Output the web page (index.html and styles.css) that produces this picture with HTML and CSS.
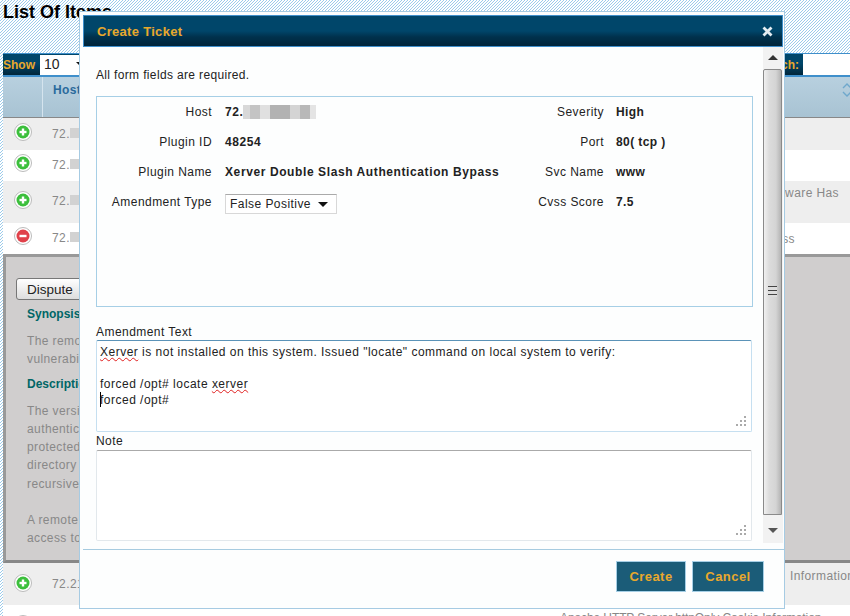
FILE: index.html
```html
<!DOCTYPE html>
<html lang="en">
<head>
  <meta charset="UTF-8" />
  <title>List Of Items</title>
  <link rel="stylesheet" href="styles.css">
</head>
<body>
  <svg class="icon-defs" width="0" height="0">
    <symbol id="row-open" viewBox="0 0 18 18">
      <circle cx="9" cy="9" r="8.5" fill="#fff" stroke="#bbb" />
      <circle cx="9" cy="9" r="6.5" fill="#3cbf3c" />
      <rect x="5.5" y="7.8" width="7" height="2.4" fill="#fff" />
      <rect x="7.8" y="5.5" width="2.4" height="7" fill="#fff" />
    </symbol>
    <symbol id="row-close" viewBox="0 0 18 18">
      <circle cx="9" cy="9" r="8.5" fill="#fff" stroke="#bbb" />
      <circle cx="9" cy="9" r="6.5" fill="#e0414a" />
      <rect x="5.5" y="7.8" width="7" height="2.4" fill="#fff" />
    </symbol>
    <symbol id="grip" viewBox="0 0 12 12">
      <path d="M9 0h2v2H9zM5 4h2v2H5zM9 4h2v2H9zM1 8h2v2H1zM5 8h2v2H5zM9 8h2v2H9z" fill="#aaa" />
    </symbol>
  </svg>

  <h1 class="page-title">List Of Items</h1>

  <div class="table-wrap">
    <div class="toolbar">
      <span class="toolbar-label">Show</span>
      <span class="select-box page-size">10</span>
      <span class="toolbar-label search-label">Search:</span>
      <span class="search-box"></span>
    </div>
    <div class="table-head">
      <div class="col-icon"></div>
      <div class="col-host">Host</div>
      <svg class="sort-icon" width="10" height="14" viewBox="0 0 10 14">
        <path d="M1 5l4-4 4 4M1 9l4 4 4-4" fill="none" stroke="#6fa8cc" stroke-width="1.4" />
      </svg>
    </div>

    <div class="row row-short row-first odd">
      <div class="col-icon"><svg class="row-icon"><use href="#row-open" /></svg></div>
      <div class="col-host">72.<span class="blur-tail"></span></div>
    </div>
    <div class="row row-short">
      <div class="col-icon"><svg class="row-icon"><use href="#row-open" /></svg></div>
      <div class="col-host">72.<span class="blur-tail"></span></div>
    </div>
    <div class="row row-tall odd">
      <div class="col-icon"><svg class="row-icon"><use href="#row-open" /></svg></div>
      <div class="col-host">72.<span class="blur-tail"></span></div>
      <div class="col-plugin end-a">Xerver Software Has</div>
    </div>
    <div class="row row-short">
      <div class="col-icon"><svg class="row-icon"><use href="#row-close" /></svg></div>
      <div class="col-host">72.<span class="blur-tail"></span></div>
      <div class="col-plugin end-b">Slash Authentication Bypass</div>
    </div>

    <div class="detail">
      <button class="dispute-btn">Dispute</button>
      <h4 class="detail-head">Synopsis</h4>
      <p class="detail-text">The remote web server is affected by an authentication bypass<br>vulnerability.</p>
      <h4 class="detail-head">Description</h4>
      <p class="detail-text">The version of Xerver installed on the remote host allows<br>authentication bypass. A request for a password<br>protected resource with a double slash gets a<br>directory listing, and the server will follow<br>recursive requests.<br><br>A remote attacker can use this to gain<br>access to protected files.</p>
    </div>

    <div class="row row-tall row-after odd">
      <div class="col-icon"><svg class="row-icon"><use href="#row-open" /></svg></div>
      <div class="col-host">72.21</div>
      <div class="col-plugin start-a">Information</div>
    </div>
    <div class="row row-clipped">
      <div class="col-icon"><svg class="row-icon"><use href="#row-open" /></svg></div>
      <div class="col-plugin start-b">Apache HTTP Server httpOnly Cookie Information</div>
    </div>
  </div>

  <!-- Create ticket dialog -->
  <div class="dialog">
    <div class="dialog-title">
      <span>Create Ticket</span>
      <svg class="dialog-close" width="11" height="11" viewBox="0 0 11 11">
        <path d="M1.5 1.5l8 8M9.5 1.5l-8 8" stroke="#e4edf2" stroke-width="2.8" />
      </svg>
    </div>

    <div class="dialog-body">
      <div class="dialog-content">
        <p class="intro">All form fields are required.</p>

        <div class="fields">
          <div class="field-label">Host</div>
          <div class="field-value">72.<span class="blur-host"></span></div>
          <div class="field-label">Severity</div>
          <div class="field-value side">High</div>

          <div class="field-label">Plugin ID</div>
          <div class="field-value">48254</div>
          <div class="field-label">Port</div>
          <div class="field-value side">80( tcp )</div>

          <div class="field-label">Plugin Name</div>
          <div class="field-value">Xerver Double Slash Authentication Bypass</div>
          <div class="field-label">Svc Name</div>
          <div class="field-value side">www</div>

          <div class="field-label">Amendment Type</div>
          <div class="field-value"><span class="select-box type-select">False Positive</span></div>
          <div class="field-label">Cvss Score</div>
          <div class="field-value side">7.5</div>
        </div>

        <div class="area-label first">Amendment Text</div>
        <div class="text-area focused">
          <div><span class="misspelled">Xerver</span> is not installed on this system. Issued "locate" command on local system to verify:</div>
          <div>&nbsp;</div>
          <div>forced /opt# locate <span class="misspelled">xerver</span></div>
          <div><span class="caret"></span>forced /opt#</div>
          <svg class="grip"><use href="#grip" /></svg>
        </div>

        <div class="area-label">Note</div>
        <div class="text-area">
          <svg class="grip"><use href="#grip" /></svg>
        </div>
      </div>

      <div class="scrollbar">
        <div class="scroll-btn"><span class="arrow-up"></span></div>
        <div class="scroll-thumb"><span class="thumb-lines"></span></div>
        <div class="scroll-btn bottom"><span class="arrow-down"></span></div>
      </div>
    </div>

    <div class="dialog-footer">
      <button class="action-btn create-btn">Create</button>
      <button class="action-btn cancel-btn">Cancel</button>
    </div>
  </div>
</body>
</html>
```

FILE: styles.css
```css
html, body {
  height: 616px;
  overflow: hidden;
}
body {
  margin: 0;
  position: relative;
  font-family: "Liberation Sans", Arial, sans-serif;
  font-size: 12px;
  letter-spacing: 0.4px;
  color: #222;
  background: #fff url("data:image/svg+xml,%3Csvg xmlns='http://www.w3.org/2000/svg' width='3' height='3' shape-rendering='crispEdges'%3E%3Cpath fill='%239ccbea' d='M2 0h1v1H2zM1 1h1v1H1zM0 2h1v1H0z'/%3E%3C/svg%3E");
}
.icon-defs {
  position: absolute;
}
.page-title {
  margin: 0;
  padding: 2px 3px 0;
  height: 53px;
  box-sizing: border-box;
  font-size: 18px;
  line-height: 20px;
  letter-spacing: 0;
  color: #000;
}

/* Table behind the dialog */
.table-wrap {
  margin-left: 3px;
}
.toolbar {
  height: 24px;
  display: flex;
  align-items: center;
  border-top: 1px solid #3f8fcb;
  border-bottom: 2px solid #3f8fcb;
  box-sizing: border-box;
  background: linear-gradient(#00466a, #00466a 45%, #00253a);
}
.toolbar-label {
  color: #e8a82c;
  font-weight: bold;
  letter-spacing: 0;
}
.page-size {
  margin-left: 5px;
  width: 54px;
  height: 20px;
  line-height: 18px;
  font-size: 14px;
  letter-spacing: 0;
  color: #222;
}
.search-label {
  margin-left: auto;
}
.search-box {
  margin-left: 4px;
  width: 47px;
  height: 21px;
  background: #fff;
}
.table-head {
  height: 40px;
  display: flex;
  position: relative;
  background: linear-gradient(#b8d0df, #a8c3d3);
  border-bottom: 1px solid #888;
  color: #2a6a9c;
  font-weight: bold;
}
.table-head .col-icon {
  border-right: 1px solid #d5e4ee;
}
.table-head .col-host {
  padding-top: 6px;
  line-height: 14px;
}
.sort-icon {
  position: absolute;
  right: -2px;
  top: 6px;
}
.col-icon {
  width: 39px;
  flex: none;
  display: flex;
  justify-content: center;
}
.col-host {
  padding-left: 10px;
}
.row {
  display: flex;
  background: #fff;
  color: #888;
  line-height: 14px;
  position: relative;
}
.row.odd {
  background: #eee;
}
.row-short {
  height: 31px;
}
.row-tall {
  height: 42px;
}
.row-clipped {
  height: 11px;
  overflow: hidden;
}
.row-icon {
  width: 18px;
  height: 18px;
}
.row-short .row-icon {
  margin-top: 4px;
}
.row-short .col-host {
  padding-top: 8px;
}
.row-tall .row-icon, .row-clipped .row-icon {
  margin-top: 10px;
}
.row-tall .col-host {
  padding-top: 13px;
}
.row-first {
  height: 32px;
}
.row-first .row-icon {
  margin-top: 5px;
}
.row-first .col-host {
  padding-top: 9px;
}
.row-after .row-icon {
  margin-top: 11px;
}
.row-after .col-host {
  padding-top: 14px;
}
.blur-tail {
  display: inline-block;
  width: 10px;
  height: 10px;
  background: #d2d2d2;
}
.col-plugin {
  white-space: nowrap;
  overflow: hidden;
  padding-top: 5px;
}
.end-a {
  margin-left: auto;
  margin-right: 11px;
}
.end-b {
  margin-left: auto;
  margin-right: 55px;
  padding-top: 9px;
}
.start-a {
  position: absolute;
  left: 787px;
  padding-top: 6px;
}
.start-b {
  position: absolute;
  left: 557px;
  padding-top: 6px;
  letter-spacing: -0.1px;
}
.detail {
  height: 309px;
  box-sizing: border-box;
  padding: 21px 0 0 10px;
  background: #d0cece;
  border-top: 3px solid #999;
  border-bottom: 3px solid #888;
  border-left: 3px solid #999;
  color: #888;
}
.dispute-btn {
  display: block;
  width: 100px;
  height: 22px;
  padding: 0 0 0 10px;
  text-align: left;
  font-family: inherit;
  font-size: 13.5px;
  letter-spacing: 0;
  color: #222;
  border: 1px solid #777;
  border-radius: 3px;
  background: linear-gradient(#fff, #ddd);
}
.detail-head {
  margin: 6px 0 0 11px;
  font-size: 12px;
  line-height: 16px;
  letter-spacing: 0;
  color: #006666;
}
.detail-text {
  margin: 10px 0 8px 11px;
  line-height: 18.1px;
  white-space: nowrap;
}

/* Dialog */
.dialog {
  position: absolute;
  left: 79px;
  top: 11px;
  width: 706px;
  height: 598px;
  box-sizing: border-box;
  padding: 3px 1px 0 3px;
  background: #fdfefe;
  border: 1px solid #a6cbe3;
}
.dialog-title {
  height: 32px;
  box-sizing: border-box;
  display: flex;
  align-items: center;
  justify-content: space-between;
  padding: 1px 9px 0 13px;
  border: 1px solid #3f8fcb;
  background: linear-gradient(#00466a, #00466a 50%, #00314c 70%, #00253a);
  color: #e8a82c;
  font-size: 13px;
  font-weight: bold;
  letter-spacing: 0.3px;
}
.dialog-body {
  height: 496px;
  display: flex;
}
.dialog-content {
  flex: 1;
  padding: 20px 10px 0 13px;
}
.intro {
  margin: 0 0 13px;
  line-height: 16px;
  letter-spacing: 0.35px;
}
.fields {
  height: 211px;
  box-sizing: border-box;
  border: 1px solid #a6cfe6;
  display: grid;
  grid-template-columns: 115px 261px 105px 1fr;
  grid-auto-rows: 30px;
  column-gap: 13px;
  align-items: center;
}
.field-label {
  text-align: right;
  letter-spacing: 0.45px;
}
.field-value {
  font-weight: bold;
  white-space: nowrap;
  letter-spacing: 0.6px;
}
.field-value.side {
  margin-left: -1px;
  letter-spacing: 0.4px;
}
.blur-host {
  display: inline-block;
  width: 73px;
  height: 14px;
  vertical-align: -3px;
  background: linear-gradient(90deg, #d8d8d8 0 7px, #c4c4c4 7px 17px, #e0e0e0 17px 27px, #b2b2b2 27px 47px, #d4d4d4 47px 57px, #b8b8b8 57px 67px, #e4e4e4 67px);
}
.select-box {
  display: inline-block;
  position: relative;
  box-sizing: border-box;
  background: #fff;
  font-weight: normal;
  padding-left: 4px;
}
.select-box::after {
  content: "";
  position: absolute;
  right: 8px;
  top: 7px;
  border-left: 5px solid transparent;
  border-right: 5px solid transparent;
  border-top: 5px solid #111;
}
.type-select {
  width: 112px;
  height: 20px;
  line-height: 18px;
  margin-top: 3px;
  letter-spacing: 0.45px;
  border: 1px solid #d8d8d8;
  border-top-color: #aaa;
  color: #222;
}
.area-label {
  height: 16px;
  margin-top: 1px;
  line-height: 16px;
  letter-spacing: 0.45px;
}
.area-label.first {
  margin-top: 17px;
}
.text-area {
  position: relative;
  width: 656px;
  height: 91px;
  box-sizing: border-box;
  padding: 3px 3px;
  margin-top: 1px;
  line-height: 16px;
  letter-spacing: 0.49px;
  background: #fff;
  border: 1px solid #e2e8ec;
  border-top-color: #aaa;
  border-radius: 2px;
}
.text-area.focused {
  margin-top: 0;
  border-color: #c5dff0;
  border-top-color: #5b93b8;
  height: 92px;
}
.misspelled {
  text-decoration: underline wavy #e02020 1px;
  text-underline-offset: 1px;
}
.caret {
  display: inline-block;
  width: 1px;
  height: 15px;
  margin-right: -1px;
  vertical-align: -3px;
  background: #000;
}
.grip {
  position: absolute;
  right: 4px;
  bottom: 3px;
  width: 12px;
  height: 12px;
}
.scrollbar {
  width: 20px;
  display: flex;
  flex-direction: column;
  background: #f2f2f2;
}
.scroll-btn {
  height: 22px;
  display: flex;
  align-items: center;
  justify-content: center;
}
.scroll-btn.bottom {
  height: 28px;
}
.arrow-up, .arrow-down {
  width: 0;
  border-left: 5px solid transparent;
  border-right: 5px solid transparent;
}
.arrow-up {
  border-bottom: 5px solid #333;
  margin-bottom: 2px;
}
.arrow-down {
  border-top: 5px solid #555;
  margin-top: 2px;
}
.scroll-thumb {
  flex: 1;
  margin: 0 1px 0 0;
  border: 1px solid #8a8a8a;
  border-radius: 2px 2px 0 0;
  background: linear-gradient(90deg, #f0f0f0, #dcdcdc 30%, #d4d4d4 70%, #b4b4b4);
  display: flex;
  align-items: center;
  justify-content: center;
}
.thumb-lines {
  width: 9px;
  height: 11px;
  background: repeating-linear-gradient(#444 0 1px, #ddd 1px 3px, #ddd 3px 4px);
  margin-top: -1px;
}
.dialog-footer {
  margin-top: 6px;
  margin-right: -1px;
  border-top: 1px solid #a6cbe0;
  padding: 11px 20px 0 0;
  display: flex;
  justify-content: flex-end;
  gap: 6px;
}
.action-btn {
  height: 31px;
  padding: 0;
  border: 1px solid #a6cfe6;
  background: #1b5c78;
  color: #e8a82c;
  font-family: inherit;
  font-size: 13px;
  font-weight: bold;
  letter-spacing: 0.45px;
}
.create-btn {
  width: 70px;
}
.cancel-btn {
  width: 72px;
}
```
